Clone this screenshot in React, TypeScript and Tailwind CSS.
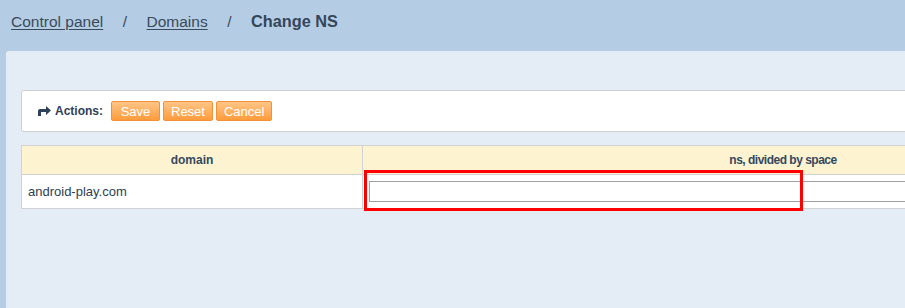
const buttons = ['Save', 'Reset', 'Cancel'];

export default function App() {
  return (
    <div
      className="relative h-[308px] w-[905px] overflow-hidden bg-[#b4cde4]"
      style={{ fontFamily: '"Liberation Sans", Arial, sans-serif' }}
    >
      <nav className="flex h-[51px] items-start gap-[19.5px] pl-[11px] pt-[10px] text-[15.5px] text-[#3b4a5a]">
        <a className="underline underline-offset-2">Control panel</a>
        <span>/</span>
        <a className="underline underline-offset-2">Domains</a>
        <span>/</span>
        <span className="text-[16.3px] font-bold leading-[23px] text-[#34465a]">Change NS</span>
      </nav>

      <main className="ml-[6px] h-[257px] rounded-tl-[3px] bg-[#e4ecf6] pl-[15px] pt-[39px]">
        <div className="flex h-[42px] w-[1000px] items-center rounded-[3px] border border-[#cfcfcf] bg-white pl-[15px]">
          <ArrowIcon />
          <span className="ml-[4px] text-[12px] font-bold text-[#2e4158]">Actions:</span>
          <div className="ml-[8px] flex gap-[3px]">
            {buttons.map((label) => (
              <button
                key={label}
                className="h-[20px] min-w-[49px] rounded-[2px] border border-[#f2913a] bg-gradient-to-b from-[#ffc585] to-[#ff9b38] px-[7px] text-[13px] leading-none text-white"
              >
                {label}
              </button>
            ))}
          </div>
        </div>

        <table className="mt-[13px] w-[1183px] border-collapse text-[12px]">
          <thead>
            <tr className="h-[29px] bg-[#fdf3d1]">
              <th className="w-[341px] border border-[#d2d2d2] font-bold text-[#34495f]">domain</th>
              <th className="border border-[#d2d2d2] font-bold tracking-[-0.5px] text-[#34495f]">
                ns, divided by space
              </th>
            </tr>
          </thead>
          <tbody>
            <tr className="h-[34px] bg-white">
              <td className="border border-[#d2d2d2] pl-[6px] text-[13px] text-[#2c3e55]">android-play.com</td>
              <td className="border border-[#d2d2d2] px-[6px]">
                <input className="block h-[21px] w-full border border-[#a0a0a0] bg-white outline-none" />
              </td>
            </tr>
          </tbody>
        </table>
      </main>

      {/* annotation box drawn over the ns input */}
      <div className="pointer-events-none absolute left-[364px] top-[170px] h-[41px] w-[439px] border-[3px] border-[#ff0000]" />
    </div>
  );
}

function ArrowIcon() {
  return (
    <svg width="14" height="10" viewBox="0 0 14 10" className="text-[#2e4158]">
      <path d="M1 10 V5 Q1 3 3 3 H9 V0 L14 4.5 L9 9 V6 H4 V10 Z" fill="currentColor" />
    </svg>
  );
}
